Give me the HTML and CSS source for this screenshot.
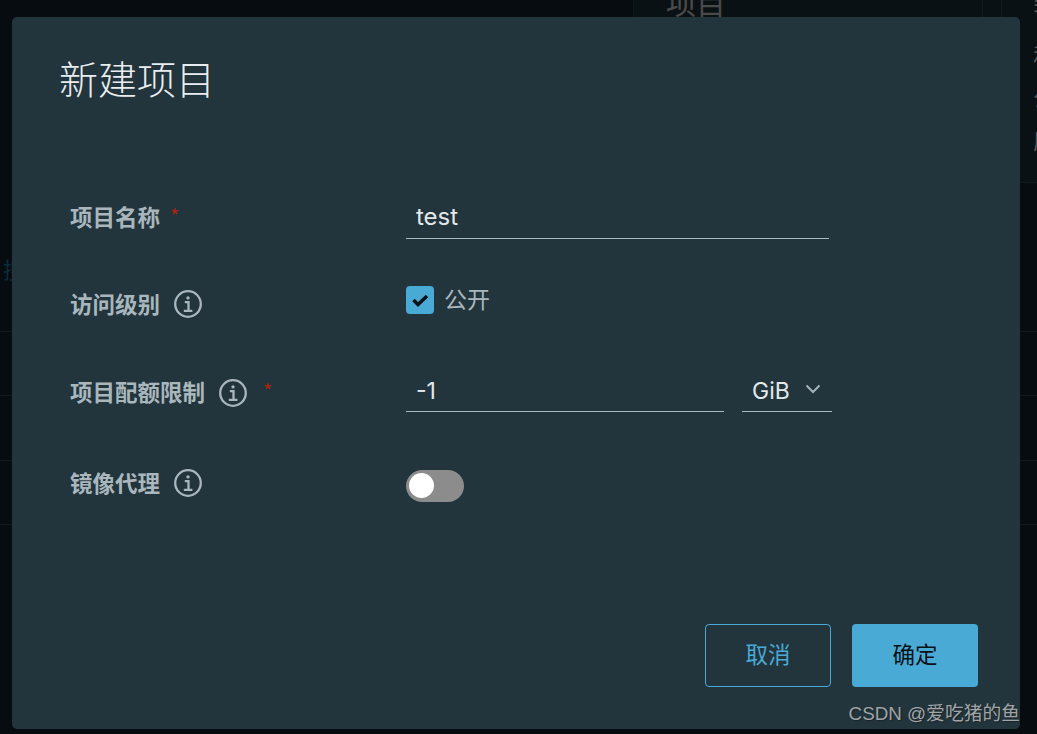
FILE: index.html
```html
<!DOCTYPE html>
<html lang="zh-CN">
<head>
    <meta charset="UTF-8">
    <meta name="viewport" content="width=device-width, initial-scale=1.0">
    <title>新建项目</title>
    <link rel="stylesheet" href="styles.css">
</head>
<body>
    <!-- dimmed page behind the dialog -->
    <div class="backdrop">
        <div class="bg-top">
            <div class="bg-heading">项目</div>
            <div class="bg-gap"></div>
            <div class="bg-panel">
                <span>类</span>
                <span>私</span>
                <span>公</span>
                <span>应</span>
            </div>
        </div>
        <div class="bg-search">搜</div>
        <div class="bg-table">
            <div class="bg-row"></div>
            <div class="bg-row"></div>
            <div class="bg-row"></div>
            <div class="bg-row"></div>
        </div>
    </div>

    <div class="modal">
        <h1 class="modal-title">新建项目</h1>
        <form class="form">
            <div class="form-row row-name">
                <label class="form-label">项目名称<span class="required">*</span></label>
                <div class="field">
                    <input class="text-input name-input" type="text" value="test">
                </div>
            </div>
            <div class="form-row row-access">
                <label class="form-label">访问级别
                    <svg class="info-icon" viewBox="0 0 28 28"><circle cx="14" cy="14" r="12.8"/><circle class="dot" cx="14" cy="7.9" r="1.7"/><path d="M10.8 12.2h3.7v8.6M9.8 20.9h8.6"/></svg>
                </label>
                <div class="field check-field">
                    <span class="checkbox">
                        <svg viewBox="0 0 28 28"><path d="M7.5 14l4.5 4.5 9-8.5"/></svg>
                    </span>
                    <span class="check-text">公开</span>
                </div>
            </div>
            <div class="form-row row-quota">
                <label class="form-label">项目配额限制
                    <svg class="info-icon" viewBox="0 0 28 28"><circle cx="14" cy="14" r="12.8"/><circle class="dot" cx="14" cy="7.9" r="1.7"/><path d="M10.8 12.2h3.7v8.6M9.8 20.9h8.6"/></svg>
                    <span class="required">*</span>
                </label>
                <div class="field quota-field">
                    <input class="text-input quota-input" type="text" value="-1">
                    <div class="unit-select">
                        <span>GiB</span>
                        <svg viewBox="0 0 16 10"><path d="M1.5 1.5L8 8l6.5-6.5"/></svg>
                    </div>
                </div>
            </div>
            <div class="form-row row-proxy">
                <label class="form-label">镜像代理
                    <svg class="info-icon" viewBox="0 0 28 28"><circle cx="14" cy="14" r="12.8"/><circle class="dot" cx="14" cy="7.9" r="1.7"/><path d="M10.8 12.2h3.7v8.6M9.8 20.9h8.6"/></svg>
                </label>
                <div class="field">
                    <span class="switch"><span class="knob"></span></span>
                </div>
            </div>
        </form>
        <div class="modal-footer">
            <button class="btn btn-outline" type="button">取消</button>
            <button class="btn btn-primary" type="button">确定</button>
        </div>
    </div>

    <div class="watermark">CSDN @爱吃猪的鱼</div>
</body>
</html>
```

FILE: styles.css
```css
html, body {
    margin: 0;
    padding: 0;
    height: 734px;
    overflow: hidden;
}
body {
    background-color: #070c10;
    font-family: "Noto Sans CJK SC", "Noto Sans", sans-serif;
    position: relative;
}
.backdrop {
    height: 734px;
    overflow: hidden;
}
.bg-top {
    display: flex;
    height: 183px;
}
.bg-heading {
    width: 349px;
    height: 17px;
    margin-left: 633px;
    padding-left: 32px;
    border-left: 1px solid #10171b;
    box-sizing: border-box;
    background-color: #0a1114;
    color: #4a4a4a;
    font-size: 30px;
    line-height: 2px;
}
.bg-gap {
    width: 19px;
    height: 17px;
    border-left: 1px solid #151c20;
    box-sizing: border-box;
    background-color: #0a1114;
}
.bg-panel {
    flex: 1;
    display: flex;
    flex-direction: column;
    gap: 18px;
    padding-left: 31px;
    border-left: 1px solid #151c20;
    border-bottom: 1px solid #11181c;
    background-color: #0a1114;
    color: #4f5559;
    font-size: 24px;
    line-height: 24px;
    overflow: hidden;
}
.bg-panel span:first-child {
    margin: -12px 0 13px;
}
.bg-search {
    margin: 73px 0 0 3px;
    color: #0d2c3a;
    font-size: 22px;
    line-height: 24px;
    height: 24px;
}
.bg-row {
    height: 63.4px;
    border-bottom: 1px solid #14191c;
}
.bg-row:first-child {
    height: 51px;
}
.modal {
    position: absolute;
    left: 12px;
    top: 17px;
    width: 1008px;
    height: 712px;
    box-sizing: border-box;
    padding: 34px 42px 42px 47px;
    background-color: #22343c;
    border-radius: 5px;
    display: flex;
    flex-direction: column;
}
.modal-title {
    margin: 0;
    font-size: 39px;
    line-height: 52px;
    font-weight: 300;
    color: #e9edef;
}
.form {
    flex: 1;
    margin-top: 91px;
    padding-left: 11px;
    display: flex;
    flex-direction: column;
}
.form-row {
    display: flex;
    align-items: flex-start;
}
.row-name {
    height: 88px;
}
.row-access {
    height: 88px;
}
.row-quota {
    height: 92px;
}
.form-label {
    width: 336px;
    height: 44px;
    margin-top: -1px;
    display: flex;
    align-items: center;
    color: #a9b7bd;
    font-size: 22.5px;
    font-weight: 700;
    line-height: 44px;
}
.row-name .form-label {
    margin-top: 0;
}
.row-proxy .form-label {
    margin-top: -2px;
}
.required {
    color: #a8240e;
    font-size: 20px;
    font-weight: 400;
    margin-left: 10px;
}
.row-quota .required {
    margin-left: 16px;
}
.info-icon {
    width: 28px;
    height: 28px;
    margin-left: 14px;
    fill: none;
    stroke: #a9b7bd;
    stroke-width: 2.3;
}
.info-icon .dot {
    fill: #a9b7bd;
    stroke: none;
}
.row-access .info-icon, .row-proxy .info-icon {
    margin-top: 2px;
}
.row-quota .info-icon {
    margin-top: 4px;
}
.field {
    display: flex;
    align-items: center;
}
.text-input {
    box-sizing: border-box;
    height: 45px;
    padding: 0 10px;
    border: none;
    border-bottom: 1px solid #a9b8be;
    background: transparent;
    color: #e3e8ea;
    font-family: "Inter", "Noto Sans", sans-serif;
    font-size: 24px;
    outline: none;
}
.name-input {
    width: 423px;
}
.quota-input {
    width: 318px;
    margin-top: -3px;
    padding-top: 3px;
    font-size: 23px;
}
.check-field {
    gap: 10px;
    margin-top: 4px;
}
.checkbox {
    width: 28px;
    height: 28px;
    border-radius: 4px;
    background-color: #4aaad6;
}
.checkbox svg {
    display: block;
    width: 28px;
    height: 28px;
    fill: none;
    stroke: #0b1216;
    stroke-width: 3.5;
}
.check-text {
    margin-top: -4px;
    color: #a9b7bd;
    font-size: 23px;
    line-height: 28px;
}
.unit-select {
    box-sizing: border-box;
    width: 90px;
    height: 45px;
    margin: -3px 0 0 18px;
    padding: 3px 11px 0 10px;
    display: flex;
    align-items: center;
    justify-content: space-between;
    border-bottom: 1px solid #a9b8be;
    color: #e3e8ea;
    font-family: "Inter", "Noto Sans", sans-serif;
    font-size: 23px;
}
.unit-select svg {
    width: 16px;
    height: 10px;
    margin-top: -3px;
    fill: none;
    stroke: #a6b4ba;
    stroke-width: 2;
}
.switch {
    display: block;
    box-sizing: border-box;
    width: 58px;
    height: 32px;
    margin-top: 8px;
    padding: 3px;
    border-radius: 16px;
    background-color: #8c8c8c;
}
.knob {
    display: block;
    width: 25px;
    height: 25px;
    border-radius: 50%;
    background-color: #ffffff;
}
.modal-footer {
    display: flex;
    justify-content: flex-end;
    gap: 21px;
}
.btn {
    width: 126px;
    height: 63px;
    padding: 0 0 6px;
    border-radius: 4px;
    font-family: "Noto Sans CJK SC", sans-serif;
    font-size: 22.5px;
    cursor: pointer;
}
.btn-outline {
    background: transparent;
    border: 1px solid #4aaad6;
    color: #4aaad6;
}
.btn-primary {
    background-color: #4aaad6;
    border: none;
    color: #0b1216;
}
.watermark {
    position: absolute;
    right: 17px;
    top: 701px;
    color: #a0a4a6;
    font-family: "Liberation Sans", "Noto Sans CJK SC", sans-serif;
    font-size: 18.8px;
    line-height: 26px;
    text-shadow: 1px 1px 1px #1a2529;
}
```
